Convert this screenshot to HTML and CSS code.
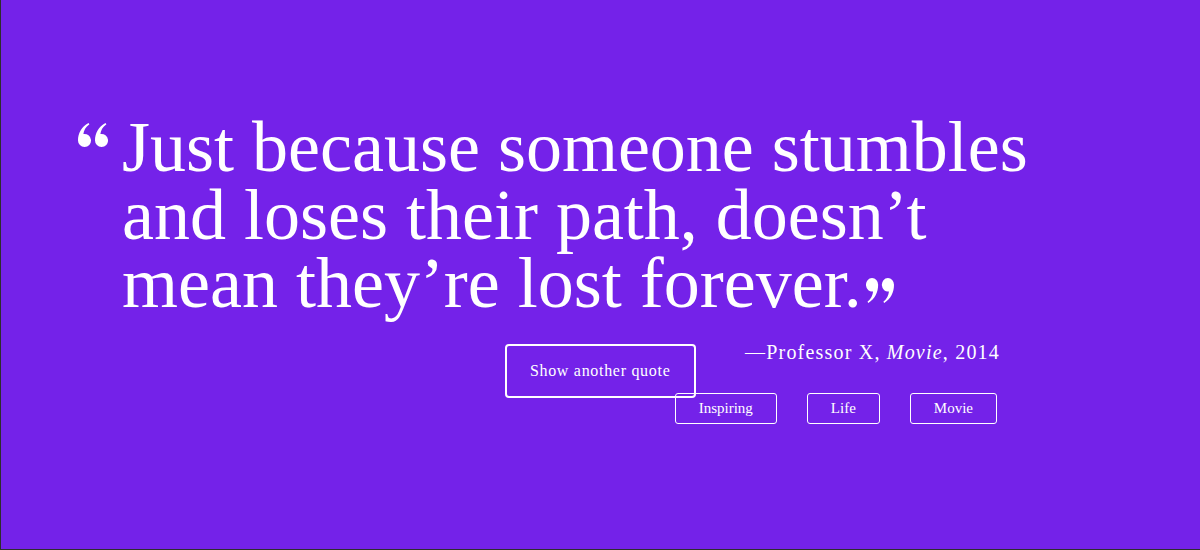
FILE: index.html
```html
<!DOCTYPE html>
<html lang="en">
<head>
<meta charset="utf-8">
<title>Random Quote</title>
<link rel="stylesheet" href="styles.css">
</head>
<body>
<main class="page">
  <section class="content">
    <blockquote class="quote">
      <svg class="mark mark-open" viewBox="0 0 30 24" aria-hidden="true">
        <g transform="rotate(180 15 12)">
          <path d="M6.5 0 A6.5 6.5 0 0 1 13 6.5 C13 14 9.5 20 2.5 24 L1.6 22.7 C5.4 20 7.2 16.5 7.6 12.9 A6.5 6.5 0 1 1 6.5 0 Z"/>
          <path transform="translate(17 0)" d="M6.5 0 A6.5 6.5 0 0 1 13 6.5 C13 14 9.5 20 2.5 24 L1.6 22.7 C5.4 20 7.2 16.5 7.6 12.9 A6.5 6.5 0 1 1 6.5 0 Z"/>
        </g>
      </svg>
      <p class="quote-text"><span class="line">Just because someone stumbles</span><span class="line">and loses their path, doesn’t</span><span class="line">mean they’re lost forever.<svg class="mark mark-close" viewBox="0 0 30 24" preserveAspectRatio="none" aria-hidden="true">
          <path d="M6.5 0 A6.5 6.5 0 0 1 13 6.5 C13 14 9.5 20 2.5 24 L1.6 22.7 C5.4 20 7.2 16.5 7.6 12.9 A6.5 6.5 0 1 1 6.5 0 Z"/>
          <path transform="translate(17 0)" d="M6.5 0 A6.5 6.5 0 0 1 13 6.5 C13 14 9.5 20 2.5 24 L1.6 22.7 C5.4 20 7.2 16.5 7.6 12.9 A6.5 6.5 0 1 1 6.5 0 Z"/>
        </svg></span></p>
    </blockquote>
    <div class="footer">
      <button class="new-quote" type="button">Show another quote</button>
      <div class="meta">
        <p class="attribution">—Professor X, <cite>Movie</cite>, 2014</p>
        <ul class="tags">
          <li class="tag">Inspiring</li>
          <li class="tag">Life</li>
          <li class="tag">Movie</li>
        </ul>
      </div>
    </div>
  </section>
</main>
</body>
</html>
```

FILE: styles.css
```css
html, body {
  margin: 0;
  padding: 0;
}

body {
  font-family: "Liberation Serif", "Times New Roman", serif;
  color: #ffffff;
  background: #7422e9;
}

.page {
  box-sizing: border-box;
  width: 1200px;
  height: 550px;
  background: #7422e9;
  border-left: 1px solid #2e2e2e;
  border-bottom: 1px solid #2e2e2e;
  padding: 113px 0 0 77px;
}

.content {
  width: 922px;
}

.quote {
  margin: 0;
  display: flex;
  align-items: flex-start;
}

.mark {
  fill: #ffffff;
  display: block;
}

.mark-open {
  width: 30px;
  height: 24px;
  margin-top: 10px;
  margin-right: 14px;
  flex: none;
}

.quote-text {
  margin: 0;
  font-size: 72px;
  line-height: 68px;
  white-space: nowrap;
  display: flex;
  flex-direction: column;
}

.line {
  display: block;
  height: 68px;
}

.mark-close {
  display: inline-block;
  width: 28px;
  height: 25px;
  margin-left: 4px;
  vertical-align: 4px;
}

.footer {
  margin-top: 23px;
  display: flex;
  justify-content: flex-end;
  align-items: flex-start;
}

.new-quote {
  box-sizing: border-box;
  width: 191px;
  height: 54px;
  margin-top: 4px;
  padding: 0;
  border: 2px solid #ffffff;
  border-radius: 4px;
  background: transparent;
  color: #ffffff;
  font-family: "Liberation Serif", "Times New Roman", serif;
  font-size: 16px;
  letter-spacing: 0.7px;
  line-height: 50px;
}

.meta {
  margin-left: -21px;
  display: flex;
  flex-direction: column;
  align-items: flex-end;
}

.attribution {
  margin: 0;
  font-size: 20px;
  line-height: 24px;
  letter-spacing: 1.2px;
}

.attribution cite {
  font-style: italic;
}

.tags {
  list-style: none;
  margin: 29px 3px 0 0;
  padding: 0;
  display: flex;
  gap: 30px;
}

.tag {
  border: 1px solid #ffffff;
  border-radius: 3px;
  padding: 0 23px;
  font-size: 15px;
  line-height: 29px;
}
```
